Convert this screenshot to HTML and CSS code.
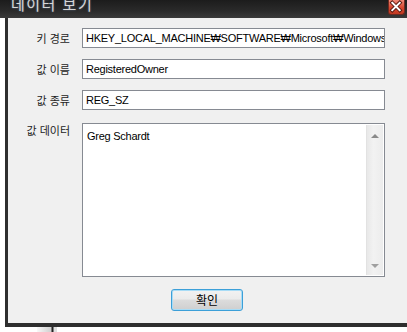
FILE: index.html
```html
<!DOCTYPE html>
<html lang="ko">
<head>
<meta charset="utf-8">
<link rel="stylesheet" href="styles.css">
</head>
<body>
<div class="titlebar">
  <span class="title">데이터 보기</span>
  <span class="close">
    <svg width="17" height="15" viewBox="0 0 17 15">
      <path d="M4.5 3.5 L12.5 11.5 M12.5 3.5 L4.5 11.5" stroke="#5a1a10" stroke-width="4" stroke-linecap="square"/>
      <path d="M4.5 3.5 L12.5 11.5 M12.5 3.5 L4.5 11.5" stroke="#ffffff" stroke-width="2" stroke-linecap="square"/>
    </svg>
  </span>
</div>
<div class="frame">
  <div class="form">
    <label class="label">키 경로</label>
    <div class="field">HKEY_LOCAL_MACHINE₩SOFTWARE₩Microsoft₩Windows NT₩CurrentVersion</div>
    <label class="label">값 이름</label>
    <div class="field">RegisteredOwner</div>
    <label class="label">값 종류</label>
    <div class="field">REG_SZ</div>
    <label class="label label-top">값 데이터</label>
    <div class="area">
      <div class="area-text">Greg Schardt</div>
      <div class="scrollbar">
        <span class="arrow up"></span>
        <span class="arrow down"></span>
      </div>
    </div>
  </div>
  <div class="actions">
    <button class="btn">확인</button>
  </div>
</div>
<div class="fragment"></div>
</body>
</html>
```
FILE: styles.css
```css
html, body {
  margin: 0;
  padding: 0;
}
body {
  width: 407px;
  height: 332px;
  overflow: hidden;
  background: #ffffff;
  position: relative;
  font-family: "Liberation Sans", "Noto Sans CJK KR", sans-serif;
}
.titlebar {
  height: 18px;
  display: flex;
  align-items: flex-start;
  background: linear-gradient(#1c1c1c, #2a2a2a 60%, #3a3a3a);
  overflow: hidden;
}
.title {
  margin-left: 11px;
  margin-top: -5px;
  font-family: "Noto Sans CJK KR", sans-serif;
  font-size: 15px;
  line-height: 18px;
  color: #d6d6d6;
  letter-spacing: 1.5px;
  text-shadow: 0 0 2px rgba(140, 170, 220, 0.6);
}
.close {
  margin-left: auto;
  margin-right: 2px;
  width: 17px;
  height: 15px;
  display: flex;
  background: linear-gradient(#f08a78, #d8462e 55%, #c23a22);
  border: 1px solid #6e2a20;
  border-top: none;
  border-radius: 0 0 3px 3px;
  box-sizing: border-box;
}
.close svg { display: block; margin: -1px 0 0 -1px; }
.frame {
  margin-left: 5px;
  width: 420px;
  height: 305px;
  border-left: 3px solid #2e2e2e;
  border-bottom: 4px solid #2e2e2e;
  background: #f0f0f0;
  display: flex;
  flex-direction: column;
}
.form {
  padding-top: 10px;
  display: grid;
  grid-template-columns: 62px 303px;
  column-gap: 12px;
  grid-template-rows: 20px 20px 20px 154px;
  row-gap: 11px;
}
.label {
  font-family: "Noto Sans CJK KR", sans-serif;
  font-size: 11px;
  color: #1e1e1e;
  text-align: right;
  align-self: center;
  line-height: 14px;
}
.label-top {
  align-self: start;
  margin-top: 2px;
}
.field {
  box-sizing: border-box;
  height: 20px;
  border: 1px solid #868a92;
  background: #fff;
  font-size: 11px;
  letter-spacing: -0.25px;
  line-height: 18px;
  padding-left: 3px;
  white-space: nowrap;
  overflow: hidden;
  color: #000;
}
.area {
  margin-top: 2px;
  box-sizing: border-box;
  height: 154px;
  border: 1px solid #868a92;
  background: #fff;
  display: flex;
}
.area-text {
  flex: 1;
  padding: 5px 0 0 4px;
  font-size: 11px;
  letter-spacing: -0.25px;
  line-height: 14px;
  color: #000;
}
.scrollbar {
  width: 16px;
  margin: 1px 1px 1px 0;
  background: linear-gradient(90deg, #e8e8e8, #f2f2f2 40%, #ececec);
  border-left: 1px solid #e2e2e2;
  display: flex;
  flex-direction: column;
  justify-content: space-between;
  align-items: center;
  padding: 9px 0 7px;
}
.arrow {
  width: 0;
  height: 0;
  border-left: 4px solid transparent;
  border-right: 4px solid transparent;
}
.arrow.up { border-bottom: 4px solid #8a8a8a; }
.arrow.down { border-top: 4px solid #a0a0a0; }
.actions {
  padding-top: 14px;
  padding-left: 163px;
  display: flex;
}
.btn {
  width: 72px;
  height: 22px;
  box-sizing: border-box;
  border: 1px solid #3c9fd8;
  border-radius: 3px;
  box-shadow: inset 0 0 0 1px #a8dcf6;
  background: linear-gradient(#f2f2f2, #ebebeb 45%, #dcdcdc 50%, #cfcfcf);
  font-family: "Noto Sans CJK KR", sans-serif;
  font-size: 12px;
  color: #000;
  padding: 0;
  line-height: 18px;
}
.fragment {
  position: absolute;
  left: 37px;
  top: 327px;
  width: 20px;
  height: 5px;
  background: linear-gradient(90deg, #f8f8f8, #d0d0d0 70%, #222 75%, #222 80%, #e0e0e0 85%);
}
```
